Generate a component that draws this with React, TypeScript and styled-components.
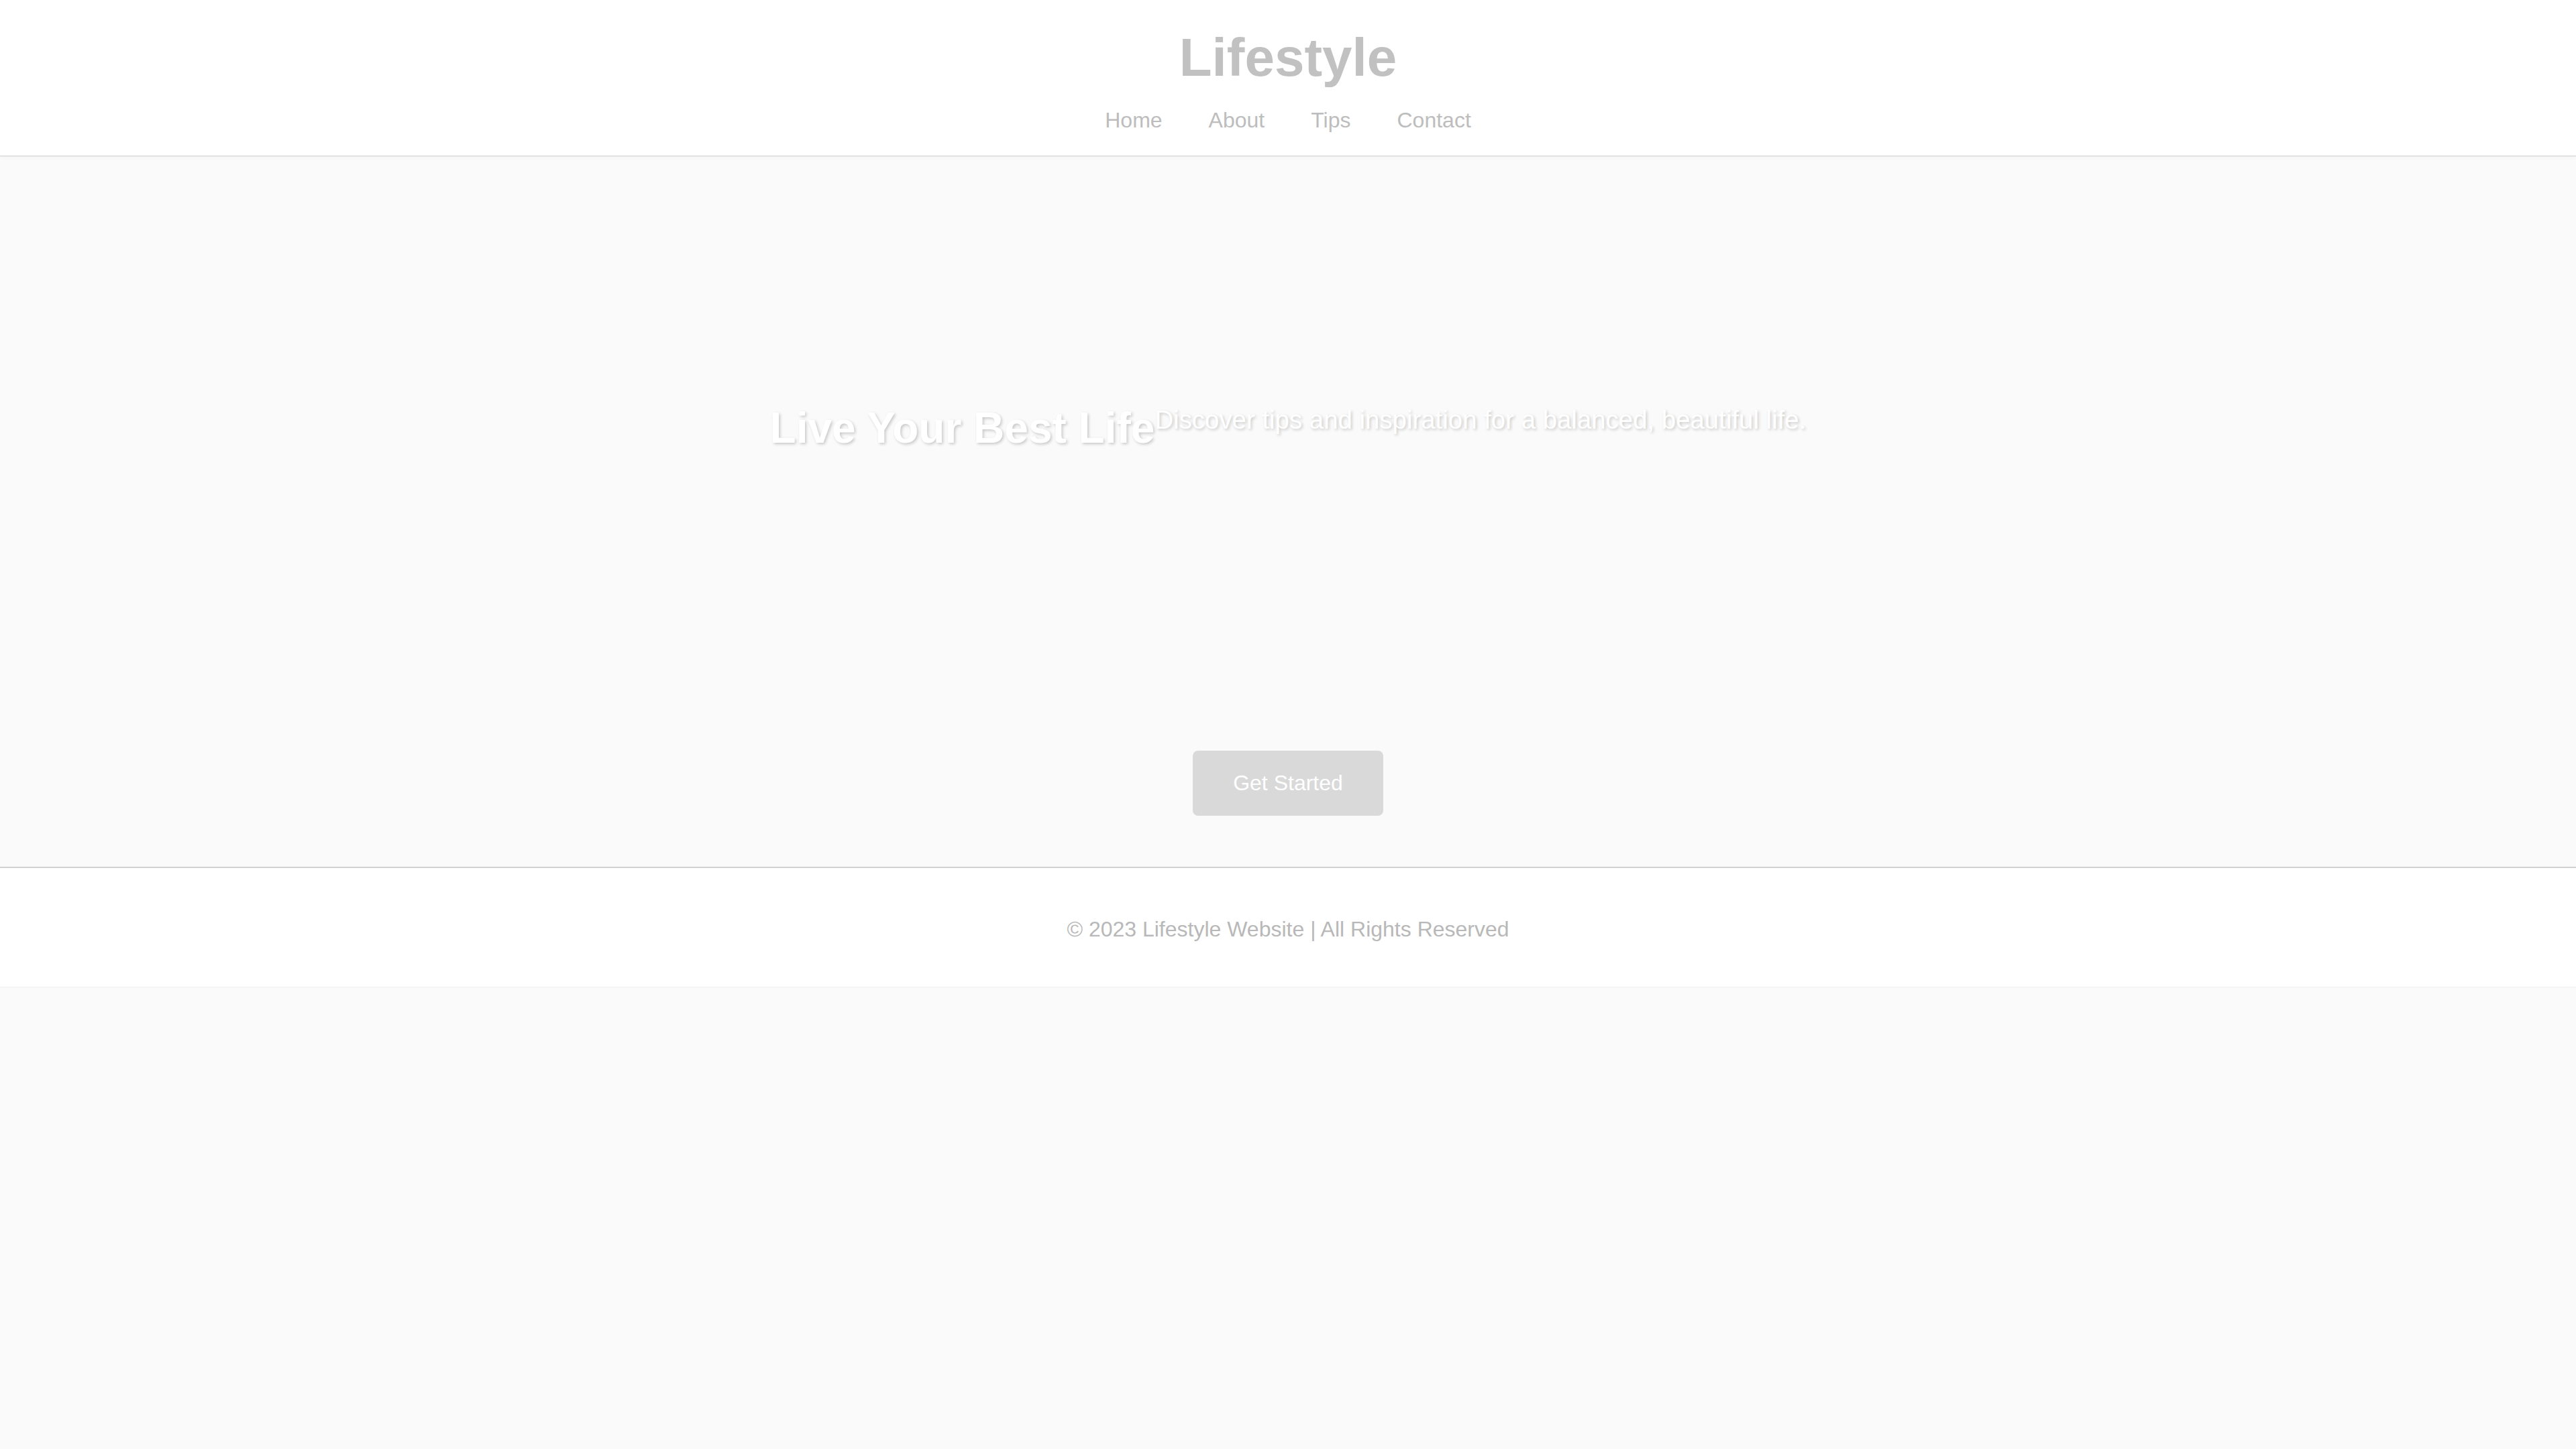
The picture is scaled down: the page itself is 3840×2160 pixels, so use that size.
import React from "react";
import styled, { createGlobalStyle } from "styled-components";

const GlobalStyle = createGlobalStyle`
  html, body {
    margin: 0;
    padding: 0;
    background: #fafafa;
    font-family: "Liberation Sans", Arial, sans-serif;
  }
  * { box-sizing: border-box; }
`;

const Page = styled.div`
  display: flex;
  flex-direction: column;
  width: 100%;
  min-height: 2160px;
  background: #fafafa;
`;

const Header = styled.header`
  display: flex;
  flex-direction: column;
  align-items: center;
  background: #ffffff;
  padding: 40px 0 34px;
  border-bottom: 1px solid #cfcfcf;
  box-shadow: 0 2px 6px rgba(0, 0, 0, 0.03);
  position: relative;
  z-index: 1;
`;

const Logo = styled.h1`
  margin: 0;
  font-size: 80px;
  font-weight: 700;
  color: #c1c1c1;
  line-height: normal;
`;

const Nav = styled.nav`
  display: flex;
  gap: 69px;
  margin-top: 29px;
`;

const NavLink = styled.a`
  font-size: 32px;
  color: #bdbdbd;
  text-decoration: none;
  line-height: normal;
`;

const Hero = styled.section`
  display: flex;
  flex-direction: column;
  align-items: center;
  padding: 368px 0 76px;
  background: #fafafa;
`;

const HeroRow = styled.div`
  display: flex;
  align-items: flex-start;
  justify-content: center;
`;

const HeroTitle = styled.h2`
  margin: 0;
  font-size: 64px;
  font-weight: 700;
  color: #ffffff;
  line-height: normal;
  text-shadow: 2px 2px 4px rgba(0, 0, 0, 0.2);
`;

const HeroText = styled.p`
  margin: 3px 0 0;
  font-size: 38.4px;
  color: #ffffff;
  line-height: normal;
  text-shadow: 2px 2px 4px rgba(0, 0, 0, 0.2);
`;

const CTA = styled.button`
  margin-top: 444px;
  padding: 30px 60px;
  font-family: "Liberation Sans", Arial, sans-serif;
  font-size: 32px;
  line-height: normal;
  color: #ffffff;
  background: #d9d9d9;
  border: none;
  border-radius: 8px;
  cursor: pointer;
`;

const Footer = styled.footer`
  display: flex;
  justify-content: center;
  background: #ffffff;
  border-top: 2px solid #d2d2d2;
  border-bottom: 1px solid #f0f0f0;
  padding: 73px 0 67px;
`;

const FooterText = styled.p`
  margin: 0;
  font-size: 32px;
  color: #b8b8b8;
  line-height: normal;
`;

export default function App() {
  const links = ["Home", "About", "Tips", "Contact"];
  return (
    <>
      <GlobalStyle />
      <Page>
        <Header>
          <Logo>Lifestyle</Logo>
          <Nav>
            {links.map((l) => (
              <NavLink key={l} href="#">
                {l}
              </NavLink>
            ))}
          </Nav>
        </Header>
        <Hero>
          <HeroRow>
            <HeroTitle>Live Your Best Life</HeroTitle>
            <HeroText>Discover tips and inspiration for a balanced, beautiful life.</HeroText>
          </HeroRow>
          <CTA>Get Started</CTA>
        </Hero>
        <Footer>
          <FooterText>© 2023 Lifestyle Website | All Rights Reserved</FooterText>
        </Footer>
      </Page>
    </>
  );
}
